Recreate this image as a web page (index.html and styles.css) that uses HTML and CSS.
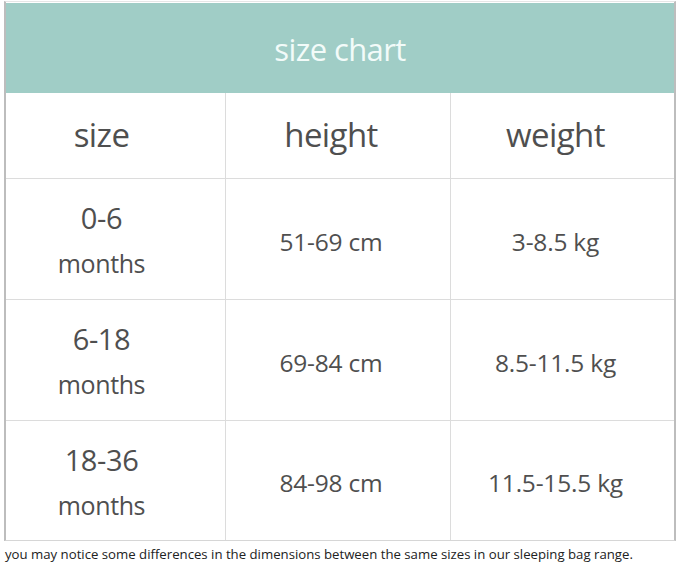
FILE: index.html
```html
<!DOCTYPE html>
<html>
<head>
<meta charset="utf-8">
<link rel="stylesheet" href="styles.css">
</head>
<body>
<div class="chart">
  <div class="title">size chart</div>
  <div class="grid">
    <div class="cell head first">size</div>
    <div class="cell head">height</div>
    <div class="cell head last">weight</div>

    <div class="cell first"><div class="age"><span class="range">0-6</span><span class="unit">months</span></div></div>
    <div class="cell val">51-69 cm</div>
    <div class="cell val last">3-8.5 kg</div>

    <div class="cell first"><div class="age"><span class="range">6-18</span><span class="unit">months</span></div></div>
    <div class="cell val">69-84 cm</div>
    <div class="cell val last">8.5-11.5 kg</div>

    <div class="cell first bottom"><div class="age"><span class="range">18-36</span><span class="unit">months</span></div></div>
    <div class="cell val bottom">84-98 cm</div>
    <div class="cell val bottom last">11.5-15.5 kg</div>
  </div>
</div>
<p class="note">you may notice some differences in the dimensions between the same sizes in our sleeping bag range.</p>
</body>
</html>
```

FILE: styles.css
```css
html, body {
  margin: 0;
  padding: 0;
  background: #ffffff;
}
body {
  font-family: "Open Sans", "Noto Sans", sans-serif;
  color: #4f4f4f;
}
.chart {
  margin: 1px 0 0 4px;
  width: 668px;
  border-top: 1px solid #e6e6e6;
  border-left: 2px solid #bdbdbd;
  border-right: 2px solid #bdbdbd;
  border-bottom: 1px solid #d6d6d6;
}
.title {
  margin-top: 1px;
  height: 90px;
  background: #a0cdc6;
  color: #f2fbf9;
  font-size: 31px;
  letter-spacing: -0.6px;
  display: flex;
  align-items: center;
  justify-content: center;
  padding-top: 2px;
  box-sizing: border-box;
}
.grid {
  display: grid;
  grid-template-columns: 220px 225px 1fr;
  grid-template-rows: 86px 121px 121px 119px;
}
.cell {
  display: flex;
  align-items: center;
  justify-content: center;
  border-right: 1px solid #dcdcdc;
  border-bottom: 1px solid #dcdcdc;
  text-align: center;
  padding-right: 14px;
}
.cell.first {
  padding-right: 28px;
}
.cell.last {
  border-right: none;
}
.cell.bottom {
  border-bottom: none;
}
.head {
  font-size: 33px;
  letter-spacing: -0.6px;
  padding-bottom: 2px;
}
.age {
  display: flex;
  flex-direction: column;
  align-items: center;
  padding-top: 4px;
}
.range {
  font-size: 29px;
  line-height: 44px;
  letter-spacing: -0.4px;
}
.unit {
  font-size: 25px;
  line-height: 46px;
  letter-spacing: -0.4px;
}
.val {
  font-size: 24.5px;
  letter-spacing: -0.2px;
  padding-top: 4px;
}
.note {
  margin: 5px 0 0 5px;
  font-size: 13.2px;
  line-height: 16px;
  color: #222222;
  letter-spacing: 0;
  white-space: nowrap;
}
```
